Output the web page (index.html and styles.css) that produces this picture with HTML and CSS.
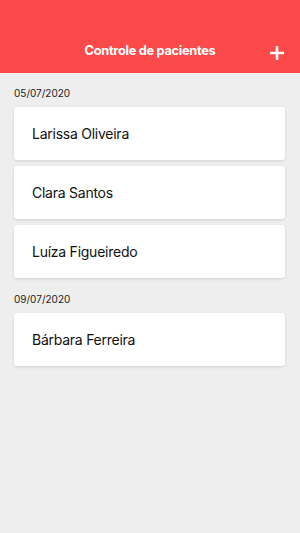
FILE: index.html
```html
<!DOCTYPE html>
<html>
<head>
    <title>Controle de pacientes</title>
    <link rel="stylesheet" href="styles.css">
</head>
<body>
    <div class="header">
        <span class="title">Controle de pacientes</span>
        <span class="add">
            <svg width="14" height="14" viewBox="0 0 14 14"><path d="M7 1v12M1 7h12" stroke="#fff" stroke-width="2.6" stroke-linecap="round"/></svg>
        </span>
    </div>
    <div class="list">
        <div class="group">
            <div class="date">05/07/2020</div>
            <div class="card">Larissa Oliveira</div>
            <div class="card">Clara Santos</div>
            <div class="card">Luíza Figueiredo</div>
        </div>
        <div class="group">
            <div class="date">09/07/2020</div>
            <div class="card">Bárbara Ferreira</div>
        </div>
    </div>
</body>
</html>
```

FILE: styles.css
```css
body { margin: 0; background-color: #eeeeee;
font-family: Inter, "Noto Sans", sans-serif; height: 533px; }
.header {
    height: 73px; background-color: #fc4a4a;
    position: relative; display: flex;
    align-items: flex-end; justify-content: center;
    box-sizing: border-box; padding-bottom: 15px;
}
.title { color: #fff; font-weight: 700; font-size: 12.8px; letter-spacing: -0.3px }
.add { position: absolute; right: 16px; bottom: 15px; height: 14px }
.list { padding: 14px 15px 0 14px }
.group { display: flex; flex-direction: column; gap: 6px; margin-bottom: 15px }
.date { font-size: 10px; color: #222; line-height: 13px; margin-bottom: 1px }
.card {
    background-color: #fff; height: 53px; border-radius: 3px;
    display: flex; align-items: center; padding-left: 18px;
    font-size: 14px; letter-spacing: -0.25px; color: #111;
    box-shadow: 0 1px 3px rgba(0,0,0,0.12);
}
```
